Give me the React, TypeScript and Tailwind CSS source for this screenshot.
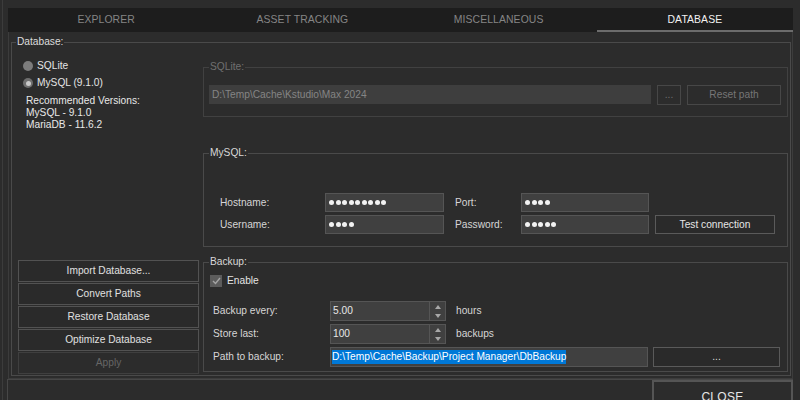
import React from 'react';

const tabs = ['EXPLORER', 'ASSET TRACKING', 'MISCELLANEOUS', 'DATABASE'];

const Dots: React.FC<{ count: number }> = ({ count }) => (
    <div className="flex gap-[1.5px] pl-[3px]">
        {Array.from({ length: count }).map((_, i) => (
            <div key={i} className="w-[5px] h-[5px] rounded-full bg-[#f2f2f2]"></div>
        ))}
    </div>
);

const Spin: React.FC<{ value: string }> = ({ value }) => (
    <div className="w-[116px] h-[20px] flex bg-[#404040] border border-[#555]">
        <div className="flex-1 flex items-center pl-[2px] text-[#e8e8e8]">{value}</div>
        <div className="w-[16px] flex flex-col border-l border-[#555]">
            <div className="flex-1 flex items-center justify-center">
                <svg width="6" height="4" viewBox="0 0 6 4"><polygon points="3,0 6,4 0,4" fill="#a8a8a8" /></svg>
            </div>
            <div className="flex-1 flex items-center justify-center">
                <svg width="6" height="4" viewBox="0 0 6 4"><polygon points="0,0 6,0 3,4" fill="#a8a8a8" /></svg>
            </div>
        </div>
    </div>
);

const App: React.FC = () => {
    return (
        <div className="w-[800px] h-[400px] overflow-hidden bg-[#2c2c2c] text-[10.2px] leading-[12px] text-[#d6d6d6] font-['Liberation_Sans',Arial,sans-serif]">
            <div className="ml-[2px] h-full border-l border-[#3c3c3c] pl-[5px] pt-[8px]">
                {/* Tabs */}
                <div className="w-[785px] h-[24px] bg-[#1d1d1d] flex">
                    {tabs.map((t, i) => (
                        <div
                            key={t}
                            className={`flex-1 flex items-center justify-center text-[10.4px] tracking-[0.1px] ${i === 3 ? 'text-[#f2f2f2] border-b-2 border-[#6c6c6c] pt-[2px]' : 'text-[#858585]'}`}
                        >
                            {t}
                        </div>
                    ))}
                </div>

                {/* Tab page */}
                <div className="w-[785px] h-[347px] border-x border-b border-[#3c3c3c] pl-[2px] pt-[4px]">
                    <fieldset className="w-[780px] h-[340px] border border-[#4a4a4a]">
                        <legend className="ml-[4px] px-[1px] leading-[12px] text-[#dcdcdc]">Database:</legend>
                        <div className="h-[327px] flex">
                            {/* Left column */}
                            <div className="ml-[6px] w-[181px] flex flex-col">
                                <div className="mt-[12px] h-[12px] flex items-center">
                                    <div className="ml-[5px] w-[10px] h-[10px] rounded-full bg-[#7c7c7c]"></div>
                                    <span className="ml-[4px] text-[#e4e4e4]">SQLite</span>
                                </div>
                                <div className="mt-[5px] h-[12px] flex items-center">
                                    <div className="ml-[5px] w-[10px] h-[10px] rounded-full bg-[#6e6e6e] flex items-center justify-center">
                                        <div className="w-[5px] h-[5px] rounded-full bg-[#c8c8c8]"></div>
                                    </div>
                                    <span className="ml-[4px] text-[#e4e4e4]">MySQL (9.1.0)</span>
                                </div>
                                <div className="mt-[6px] pl-[8px] text-[#e8e8e8]">
                                    <div>Recommended Versions:</div>
                                    <div>MySQL - 9.1.0</div>
                                    <div>MariaDB - 11.6.2</div>
                                </div>
                                <div className="mt-auto mb-[1px] flex flex-col gap-px">
                                    {['Import Database...', 'Convert Paths', 'Restore Database', 'Optimize Database'].map((b) => (
                                        <div key={b} className="h-[22px] flex items-center justify-center border border-[#525252] bg-[#2a2a2a] text-[#e0e0e0]">
                                            {b}
                                        </div>
                                    ))}
                                    <div className="h-[22px] flex items-center justify-center border border-[#3f3f3f] text-[#666]">Apply</div>
                                </div>
                            </div>

                            {/* Right column */}
                            <div className="ml-[4px] w-[585px] flex flex-col">
                                <fieldset className="mt-[13px] h-[56px] border border-[#414141]">
                                    <legend className="ml-[5px] px-[1px] leading-[12px] text-[#707070]">SQLite:</legend>
                                    <div className="mt-[12px] ml-[5px] flex">
                                        <div className="w-[442px] h-[19px] bg-[#3e3e3e] flex items-center pl-[3px] text-[#858585]">
                                            D:\Temp\Cache\Kstudio\Max 2024
                                        </div>
                                        <div className="ml-[6px] w-[24px] h-[20px] border border-[#474747] flex items-center justify-center text-[#6e6e6e]">...</div>
                                        <div className="ml-[6px] w-[94px] h-[20px] border border-[#474747] flex items-center justify-center text-[#767676]">Reset path</div>
                                    </div>
                                </fieldset>

                                <fieldset className="mt-[30px] h-[100px] border border-[#4a4a4a]">
                                    <legend className="ml-[5px] px-[1px] leading-[12px] text-[#d8d8d8]">MySQL:</legend>
                                    <div className="mt-[34px] pl-[16px] flex flex-col gap-[3px]">
                                        <div className="h-[19px] flex items-center">
                                            <div className="w-[105px]">Hostname:</div>
                                            <div className="w-[119px] h-[19px] bg-[#404040] border border-[#555] flex items-center"><Dots count={9} /></div>
                                            <div className="ml-[11px] w-[66px]">Port:</div>
                                            <div className="w-[128px] h-[19px] bg-[#404040] border border-[#555] flex items-center"><Dots count={4} /></div>
                                        </div>
                                        <div className="h-[19px] flex items-center">
                                            <div className="w-[105px]">Username:</div>
                                            <div className="w-[119px] h-[19px] bg-[#404040] border border-[#555] flex items-center"><Dots count={4} /></div>
                                            <div className="ml-[11px] w-[66px]">Password:</div>
                                            <div className="w-[128px] h-[19px] bg-[#404040] border border-[#555] flex items-center"><Dots count={5} /></div>
                                            <div className="ml-[6px] w-[120px] h-[19px] border border-[#5a5a5a] bg-[#2a2a2a] flex items-center justify-center text-[#e6e6e6]">Test connection</div>
                                        </div>
                                    </div>
                                </fieldset>

                                <fieldset className="mt-[9px] h-[116px] border border-[#4a4a4a]">
                                    <legend className="ml-[5px] px-[1px] leading-[12px] text-[#d8d8d8]">Backup:</legend>
                                    <div className="mt-[7px] ml-[6px] h-[12px] flex items-center">
                                        <div className="w-[12px] h-[12px] bg-[#5c5c5c] flex items-center justify-center">
                                            <svg width="9" height="8" viewBox="0 0 9 8">
                                                <polyline points="1,4 3.5,6.5 8,1" fill="none" stroke="#a4a4a4" strokeWidth="1.4" />
                                            </svg>
                                        </div>
                                        <span className="ml-[5px] text-[#e4e4e4]">Enable</span>
                                    </div>
                                    <div className="mt-[14px] pl-[9px] flex flex-col gap-[3px]">
                                        <div className="h-[20px] flex items-center">
                                            <div className="w-[117px]">Backup every:</div>
                                            <Spin value="5.00" />
                                            <span className="ml-[10px]">hours</span>
                                        </div>
                                        <div className="h-[20px] flex items-center">
                                            <div className="w-[117px]">Store last:</div>
                                            <Spin value="100" />
                                            <span className="ml-[10px]">backups</span>
                                        </div>
                                        <div className="h-[20px] flex items-center">
                                            <div className="w-[117px]">Path to backup:</div>
                                            <div className="w-[318px] h-[20px] bg-[#404040] border border-[#555] flex items-center pl-[1px]">
                                                <span className="bg-[#0078d7] text-white leading-[14px]">D:\Temp\Cache\Backup\Project Manager\DbBackup</span>
                                            </div>
                                            <div className="ml-[5px] w-[127px] h-[20px] border border-[#5a5a5a] bg-[#2a2a2a] flex items-center justify-center text-[#dcdcdc]">...</div>
                                        </div>
                                    </div>
                                </fieldset>
                            </div>
                        </div>
                    </fieldset>
                </div>

                {/* Bottom bar */}
                <div className="-ml-px w-[786px] h-[40px] border-t border-l border-[#474747] flex justify-end">
                    <div className="w-[141px] h-[34px] border-2 border-[#555] flex items-center justify-center text-[12px] text-[#e6e6e6] tracking-[0.3px]">
                        CLOSE
                    </div>
                </div>
            </div>
        </div>
    );
};

export default App;
